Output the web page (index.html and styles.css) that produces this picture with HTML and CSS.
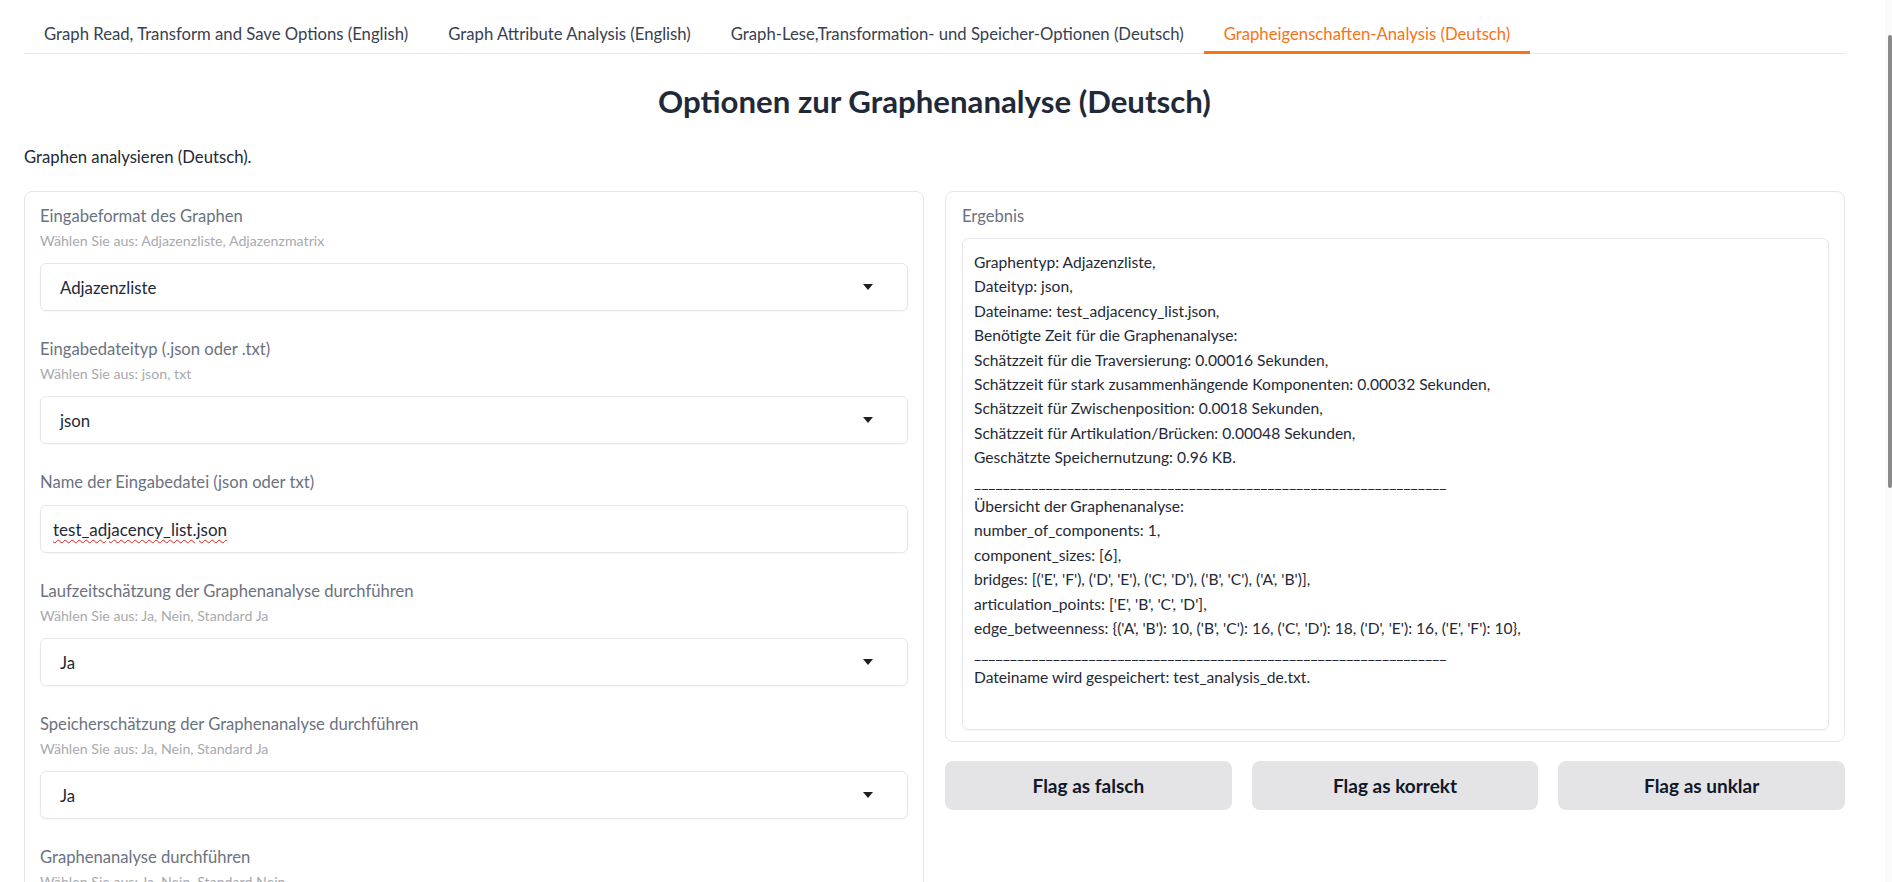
FILE: index.html
```html
<!DOCTYPE html>
<html lang="de">
<head>
  <meta charset="UTF-8" />
  <meta name="viewport" content="width=device-width, initial-scale=1.0" />
  <title>Grapheigenschaften-Analysis</title>
  <link rel="stylesheet" href="styles.css">
</head>
<body>
  <div class="app">
    <nav class="tabs">
      <button class="tab">Graph Read, Transform and Save Options (English)</button>
      <button class="tab">Graph Attribute Analysis (English)</button>
      <button class="tab">Graph-Lese,Transformation- und Speicher-Optionen (Deutsch)</button>
      <button class="tab active">Grapheigenschaften-Analysis (Deutsch)</button>
    </nav>

    <h1 class="title">Optionen zur Graphenanalyse (Deutsch)</h1>
    <p class="subtitle">Graphen analysieren (Deutsch).</p>

    <div class="columns">
      <!-- Eingaben -->
      <section class="panel form">
        <div class="field">
          <span class="label">Eingabeformat des Graphen</span>
          <span class="info">Wählen Sie aus: Adjazenzliste, Adjazenzmatrix</span>
          <div class="box select">
            <span>Adjazenzliste</span>
            <svg class="caret" width="10" height="6" viewBox="0 0 10 6"><path d="M0 0H10L5 6Z" fill="#1f1f1f"/></svg>
          </div>
        </div>
        <div class="field">
          <span class="label">Eingabedateityp (.json oder .txt)</span>
          <span class="info">Wählen Sie aus: json, txt</span>
          <div class="box select">
            <span>json</span>
            <svg class="caret" width="10" height="6" viewBox="0 0 10 6"><path d="M0 0H10L5 6Z" fill="#1f1f1f"/></svg>
          </div>
        </div>
        <div class="field">
          <span class="label">Name der Eingabedatei (json oder txt)</span>
          <div class="box text-input">
            <span class="spell">test_adjacency_list.json</span>
          </div>
        </div>
        <div class="field">
          <span class="label">Laufzeitschätzung der Graphenanalyse durchführen</span>
          <span class="info">Wählen Sie aus: Ja, Nein, Standard Ja</span>
          <div class="box select">
            <span>Ja</span>
            <svg class="caret" width="10" height="6" viewBox="0 0 10 6"><path d="M0 0H10L5 6Z" fill="#1f1f1f"/></svg>
          </div>
        </div>
        <div class="field">
          <span class="label">Speicherschätzung der Graphenanalyse durchführen</span>
          <span class="info">Wählen Sie aus: Ja, Nein, Standard Ja</span>
          <div class="box select">
            <span>Ja</span>
            <svg class="caret" width="10" height="6" viewBox="0 0 10 6"><path d="M0 0H10L5 6Z" fill="#1f1f1f"/></svg>
          </div>
        </div>
        <div class="field">
          <span class="label">Graphenanalyse durchführen</span>
          <span class="info">Wählen Sie aus: Ja, Nein, Standard Nein</span>
          <div class="box select">
            <span>Nein</span>
            <svg class="caret" width="10" height="6" viewBox="0 0 10 6"><path d="M0 0H10L5 6Z" fill="#1f1f1f"/></svg>
          </div>
        </div>
      </section>

      <!-- Ergebnis -->
      <div class="right">
        <section class="panel output">
          <span class="label">Ergebnis</span>
          <div class="box result">
            <div>Graphentyp: Adjazenzliste,</div>
            <div>Dateityp: json,</div>
            <div>Dateiname: test_adjacency_list.json,</div>
            <div>Benötigte Zeit für die Graphenanalyse:</div>
            <div>Schätzzeit für die Traversierung: 0.00016 Sekunden,</div>
            <div>Schätzzeit für stark zusammenhängende Komponenten: 0.00032 Sekunden,</div>
            <div>Schätzzeit für Zwischenposition: 0.0018 Sekunden,</div>
            <div>Schätzzeit für Artikulation/Brücken: 0.00048 Sekunden,</div>
            <div>Geschätzte Speichernutzung: 0.96 KB.</div>
            <div>__________________________________________________________________</div>
            <div>Übersicht der Graphenanalyse:</div>
            <div>number_of_components: 1,</div>
            <div>component_sizes: [6],</div>
            <div>bridges: [('E', 'F'), ('D', 'E'), ('C', 'D'), ('B', 'C'), ('A', 'B')],</div>
            <div>articulation_points: ['E', 'B', 'C', 'D'],</div>
            <div>edge_betweenness: {('A', 'B'): 10, ('B', 'C'): 16, ('C', 'D'): 18, ('D', 'E'): 16, ('E', 'F'): 10},</div>
            <div>__________________________________________________________________</div>
            <div>Dateiname wird gespeichert: test_analysis_de.txt.</div>
          </div>
        </section>
        <div class="flags">
          <button class="flag">Flag as falsch</button>
          <button class="flag">Flag as korrekt</button>
          <button class="flag">Flag as unklar</button>
        </div>
      </div>
    </div>
  </div>

  <div class="scrollbar"><div class="thumb"></div></div>
</body>
</html>
```

FILE: styles.css
```css
* {
  box-sizing: border-box;
}

body {
  font-family: Lato, "Open Sans", sans-serif;
  margin: 0;
  background-color: white;
  color: #1f2937;
  overflow: hidden;
}

.app {
  width: 1821px;
  margin-left: 24px;
  padding-top: 15px;
}

/* Tabs */
.tabs {
  display: flex;
  border-bottom: 1px solid #e5e7eb;
}

.tab {
  font-family: inherit;
  font-size: 16.7px;
  line-height: 24px;
  color: #374151;
  background: none;
  border: none;
  padding: 7px 20px 5px;
  margin-bottom: -1px;
  border-bottom: 3px solid transparent;
  cursor: pointer;
}

.tab.active {
  color: #f97316;
  border-bottom-color: #f97316;
}

.title {
  text-align: center;
  font-size: 31.2px;
  font-weight: bold;
  line-height: 36px;
  margin: 29px 0 0;
  color: #1f2937;
}

.subtitle {
  font-size: 16.7px;
  line-height: 24px;
  margin: 26px 0 0;
}

.columns {
  display: grid;
  grid-template-columns: minmax(0, 1fr) minmax(0, 1fr);
  gap: 21px;
  margin-top: 22px;
  align-items: start;
}

.panel {
  border: 1px solid #e5e7eb;
  border-radius: 8px;
  background: white;
}

.form {
  display: flex;
  flex-direction: column;
  gap: 26px;
  padding: 12px 15px 20px;
}

.field {
  display: flex;
  flex-direction: column;
}

.label {
  font-size: 16.6px;
  line-height: 24px;
  color: #6b7280;
}

.info {
  font-size: 14.2px;
  line-height: 20px;
  color: #a8aaae;
  margin-top: 3px;
}

.box {
  border: 1px solid #e5e7eb;
  border-radius: 6px;
  box-shadow: 0 1px 2px rgba(0, 0, 0, 0.04);
  font-size: 16.8px;
  color: #1f2937;
  margin-top: 11px;
}

.info + .box {
  margin-top: 12px;
}

.select {
  height: 48px;
  display: flex;
  align-items: center;
  justify-content: space-between;
  padding: 0 34px 0 19px;
}

.text-input {
  height: 48px;
  display: flex;
  align-items: center;
  padding: 0 12px;
  font-size: 17px;
}

.spell {
  text-decoration: underline wavy #e0201c;
  text-decoration-thickness: 1px;
  text-underline-offset: 3px;
}

/* Ergebnis */
.right {
  display: flex;
  flex-direction: column;
  gap: 19px;
}

.output {
  padding: 12px 15px 11px 16px;
}

.result {
  margin-top: 10px;
  height: 492px;
  padding: 11px;
  font-size: 15.6px;
  line-height: 24.4px;
  white-space: nowrap;
}

.flags {
  display: flex;
  gap: 20px;
}

.flag {
  flex: 1;
  height: 49px;
  font-family: inherit;
  font-size: 19px;
  font-weight: bold;
  color: #111827;
  background-color: #e4e4e7;
  border: none;
  border-radius: 8px;
  cursor: pointer;
}

/* fake overlay scrollbar */
.scrollbar {
  position: fixed;
  top: 0;
  right: 0;
  width: 7px;
  height: 100%;
  background-color: #fafafa;
}

.thumb {
  position: absolute;
  top: 35px;
  right: 0;
  width: 4px;
  height: 453px;
  border-radius: 2px;
  background-color: #8a8a8a;
}
```
